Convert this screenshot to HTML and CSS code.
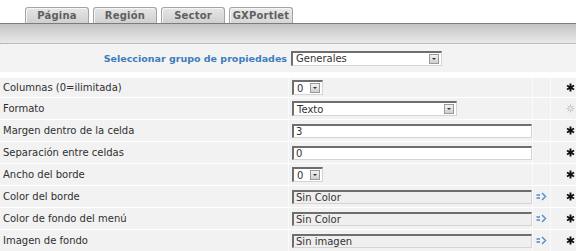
FILE: index.html
```html
<!DOCTYPE html>
<html lang="es">
<head>
<meta charset="utf-8">
<title>Propiedades</title>
<link rel="stylesheet" href="styles.css">
</head>
<body>
<div class="tabs">
  <div class="tab">Página</div>
  <div class="tab">Región</div>
  <div class="tab">Sector</div>
  <div class="tab active">GXPortlet</div>
</div>
<div class="bar"></div>
<div class="group">
  <div class="group-label">Seleccionar grupo de propiedades</div>
  <div class="cell"><div class="select w-gen"><span>Generales</span><i class="btn"></i></div></div>
</div>
<div class="props">
  <div class="row first">
    <div class="label">Columnas (0=ilimitada)</div>
    <div class="cell"><div class="select w-num"><span>0</span><i class="btn"></i></div></div>
    <div class="act"></div>
    <div class="req"><svg class="star" viewBox="0 0 10 10"><path d="M5 0.5V9.5M1.1 2.75L8.9 7.25M1.1 7.25L8.9 2.75"/></svg></div>
  </div>
  <div class="row">
    <div class="label">Formato</div>
    <div class="cell"><div class="select w-fmt"><span>Texto</span><i class="btn"></i></div></div>
    <div class="act"></div>
    <div class="req"><svg class="star hollow" viewBox="0 0 10 10"><circle cx="5" cy="5" r="2"/><path d="M5 0.5V2.4M5 7.6V9.5M0.5 5H2.4M7.6 5H9.5M1.8 1.8L3.2 3.2M6.8 6.8L8.2 8.2M1.8 8.2L3.2 6.8M6.8 3.2L8.2 1.8"/></svg></div>
  </div>
  <div class="row">
    <div class="label">Margen dentro de la celda</div>
    <div class="cell"><div class="input">3</div></div>
    <div class="act"></div>
    <div class="req"><svg class="star" viewBox="0 0 10 10"><path d="M5 0.5V9.5M1.1 2.75L8.9 7.25M1.1 7.25L8.9 2.75"/></svg></div>
  </div>
  <div class="row">
    <div class="label">Separación entre celdas</div>
    <div class="cell"><div class="input">0</div></div>
    <div class="act"></div>
    <div class="req"><svg class="star" viewBox="0 0 10 10"><path d="M5 0.5V9.5M1.1 2.75L8.9 7.25M1.1 7.25L8.9 2.75"/></svg></div>
  </div>
  <div class="row">
    <div class="label">Ancho del borde</div>
    <div class="cell"><div class="select w-num"><span>0</span><i class="btn"></i></div></div>
    <div class="act"></div>
    <div class="req"><svg class="star" viewBox="0 0 10 10"><path d="M5 0.5V9.5M1.1 2.75L8.9 7.25M1.1 7.25L8.9 2.75"/></svg></div>
  </div>
  <div class="row">
    <div class="label">Color del borde</div>
    <div class="cell"><div class="input ro">Sin Color</div></div>
    <div class="act"><svg class="arrow" viewBox="0 0 11 9"><path d="M0.5 3H4M0.5 6H4M6 1L9.5 4.5L6 8"/></svg></div>
    <div class="req"><svg class="star" viewBox="0 0 10 10"><path d="M5 0.5V9.5M1.1 2.75L8.9 7.25M1.1 7.25L8.9 2.75"/></svg></div>
  </div>
  <div class="row">
    <div class="label">Color de fondo del menú</div>
    <div class="cell"><div class="input ro">Sin Color</div></div>
    <div class="act"><svg class="arrow" viewBox="0 0 11 9"><path d="M0.5 3H4M0.5 6H4M6 1L9.5 4.5L6 8"/></svg></div>
    <div class="req"><svg class="star" viewBox="0 0 10 10"><path d="M5 0.5V9.5M1.1 2.75L8.9 7.25M1.1 7.25L8.9 2.75"/></svg></div>
  </div>
  <div class="row">
    <div class="label">Imagen de fondo</div>
    <div class="cell"><div class="input ro">Sin imagen</div></div>
    <div class="act"><svg class="arrow" viewBox="0 0 11 9"><path d="M0.5 3H4M0.5 6H4M6 1L9.5 4.5L6 8"/></svg></div>
    <div class="req"><svg class="star" viewBox="0 0 10 10"><path d="M5 0.5V9.5M1.1 2.75L8.9 7.25M1.1 7.25L8.9 2.75"/></svg></div>
  </div>
</div>
</body>
</html>
```

FILE: styles.css
```css
html, body {
  margin: 0;
  padding: 0;
  background: #ffffff;
  font-family: "DejaVu Sans", Verdana, sans-serif;
  font-size: 10px;
  color: #333;
}

.tabs {
  display: flex;
  gap: 4px;
  padding: 7px 0 0 25px;
  height: 16px;
}

.tab {
  box-sizing: border-box;
  width: 64px;
  height: 16px;
  border: 1px solid #a4a4a4;
  border-bottom: none;
  border-radius: 3px 3px 0 0;
  background: linear-gradient(#e6e6e6, #d0d0d0);
  box-shadow: inset 1px 1px 0 #f6f6f6;
  color: #606060;
  font-weight: bold;
  font-size: 10px;
  letter-spacing: 0.2px;
  text-align: center;
  line-height: 15px;
}

.tab.active {
  background: linear-gradient(#eaeaea, #d6d6d6);
}

.bar {
  height: 19px;
  border-top: 1px solid #7c7c7c;
  border-bottom: 1px dotted #b4b4b4;
  background: linear-gradient(#c4c4c4, #e8e8e8);
}

.group {
  display: grid;
  grid-template-columns: 288px 1fr;
  align-items: center;
  height: 28px;
  background: #f3f3f3;
  margin-bottom: 6px;
}

.group-label {
  text-align: right;
  padding-right: 1px;
  color: #3d7dbb;
  font-weight: bold;
  font-size: 9.5px;
}

.props {
  display: flex;
  flex-direction: column;
  gap: 1px;
}

.row {
  display: grid;
  grid-template-columns: 288px 243px 17px 1fr;
  column-gap: 1px;
  height: 21px;
  background: #fafafa;
}

.row.first {
  height: 19px;
}

.row > div {
  background: #f2f2f2;
  display: flex;
  align-items: center;
}

.label {
  padding-left: 3px;
  font-size: 10px;
  color: #303030;
}

.cell {
  padding-left: 3px;
}

.input {
  box-sizing: border-box;
  width: 240px;
  height: 14px;
  border-top: 2px solid #6e6e6e;
  border-left: 2px solid #6e6e6e;
  border-right: 1px solid #d4d4d4;
  border-bottom: 1px solid #d4d4d4;
  background: #ffffff;
  font-size: 10px;
  line-height: 11px;
  padding-left: 2px;
  color: #333;
}

.input.ro {
  background: #efefef;
}

.select {
  box-sizing: border-box;
  height: 15px;
  border-top: 2px solid #6e6e6e;
  border-left: 2px solid #6e6e6e;
  border-right: 1px solid #d4d4d4;
  border-bottom: 1px solid #d4d4d4;
  background: #ffffff;
  display: flex;
  align-items: center;
  justify-content: space-between;
  font-size: 10px;
  color: #333;
  padding: 0 2px 0 3px;
}

.w-gen { width: 151px; }
.w-fmt { width: 165px; }
.w-num { width: 31px; }

.btn {
  position: relative;
  box-sizing: border-box;
  width: 10px;
  height: 10px;
  border: 1px solid #9a9a9a;
  background: linear-gradient(#f2f2f2, #cfcfcf);
}

.btn::after {
  content: "";
  position: absolute;
  left: 2px;
  top: 3px;
  border-left: 2px solid transparent;
  border-right: 2px solid transparent;
  border-top: 2px solid #333;
}

.act {
  justify-content: center;
}

.req {
  padding-left: 15px;
}

.star {
  width: 9px;
  height: 9px;
  fill: none;
  stroke: #111;
  stroke-width: 2.1;
  stroke-linecap: butt;
}

.star.hollow {
  stroke: #b9b9b9;
  stroke-width: 0.9;
}

.arrow {
  width: 11px;
  height: 9px;
  fill: none;
  stroke: #4a8bc9;
  stroke-width: 1.4;
}
```
